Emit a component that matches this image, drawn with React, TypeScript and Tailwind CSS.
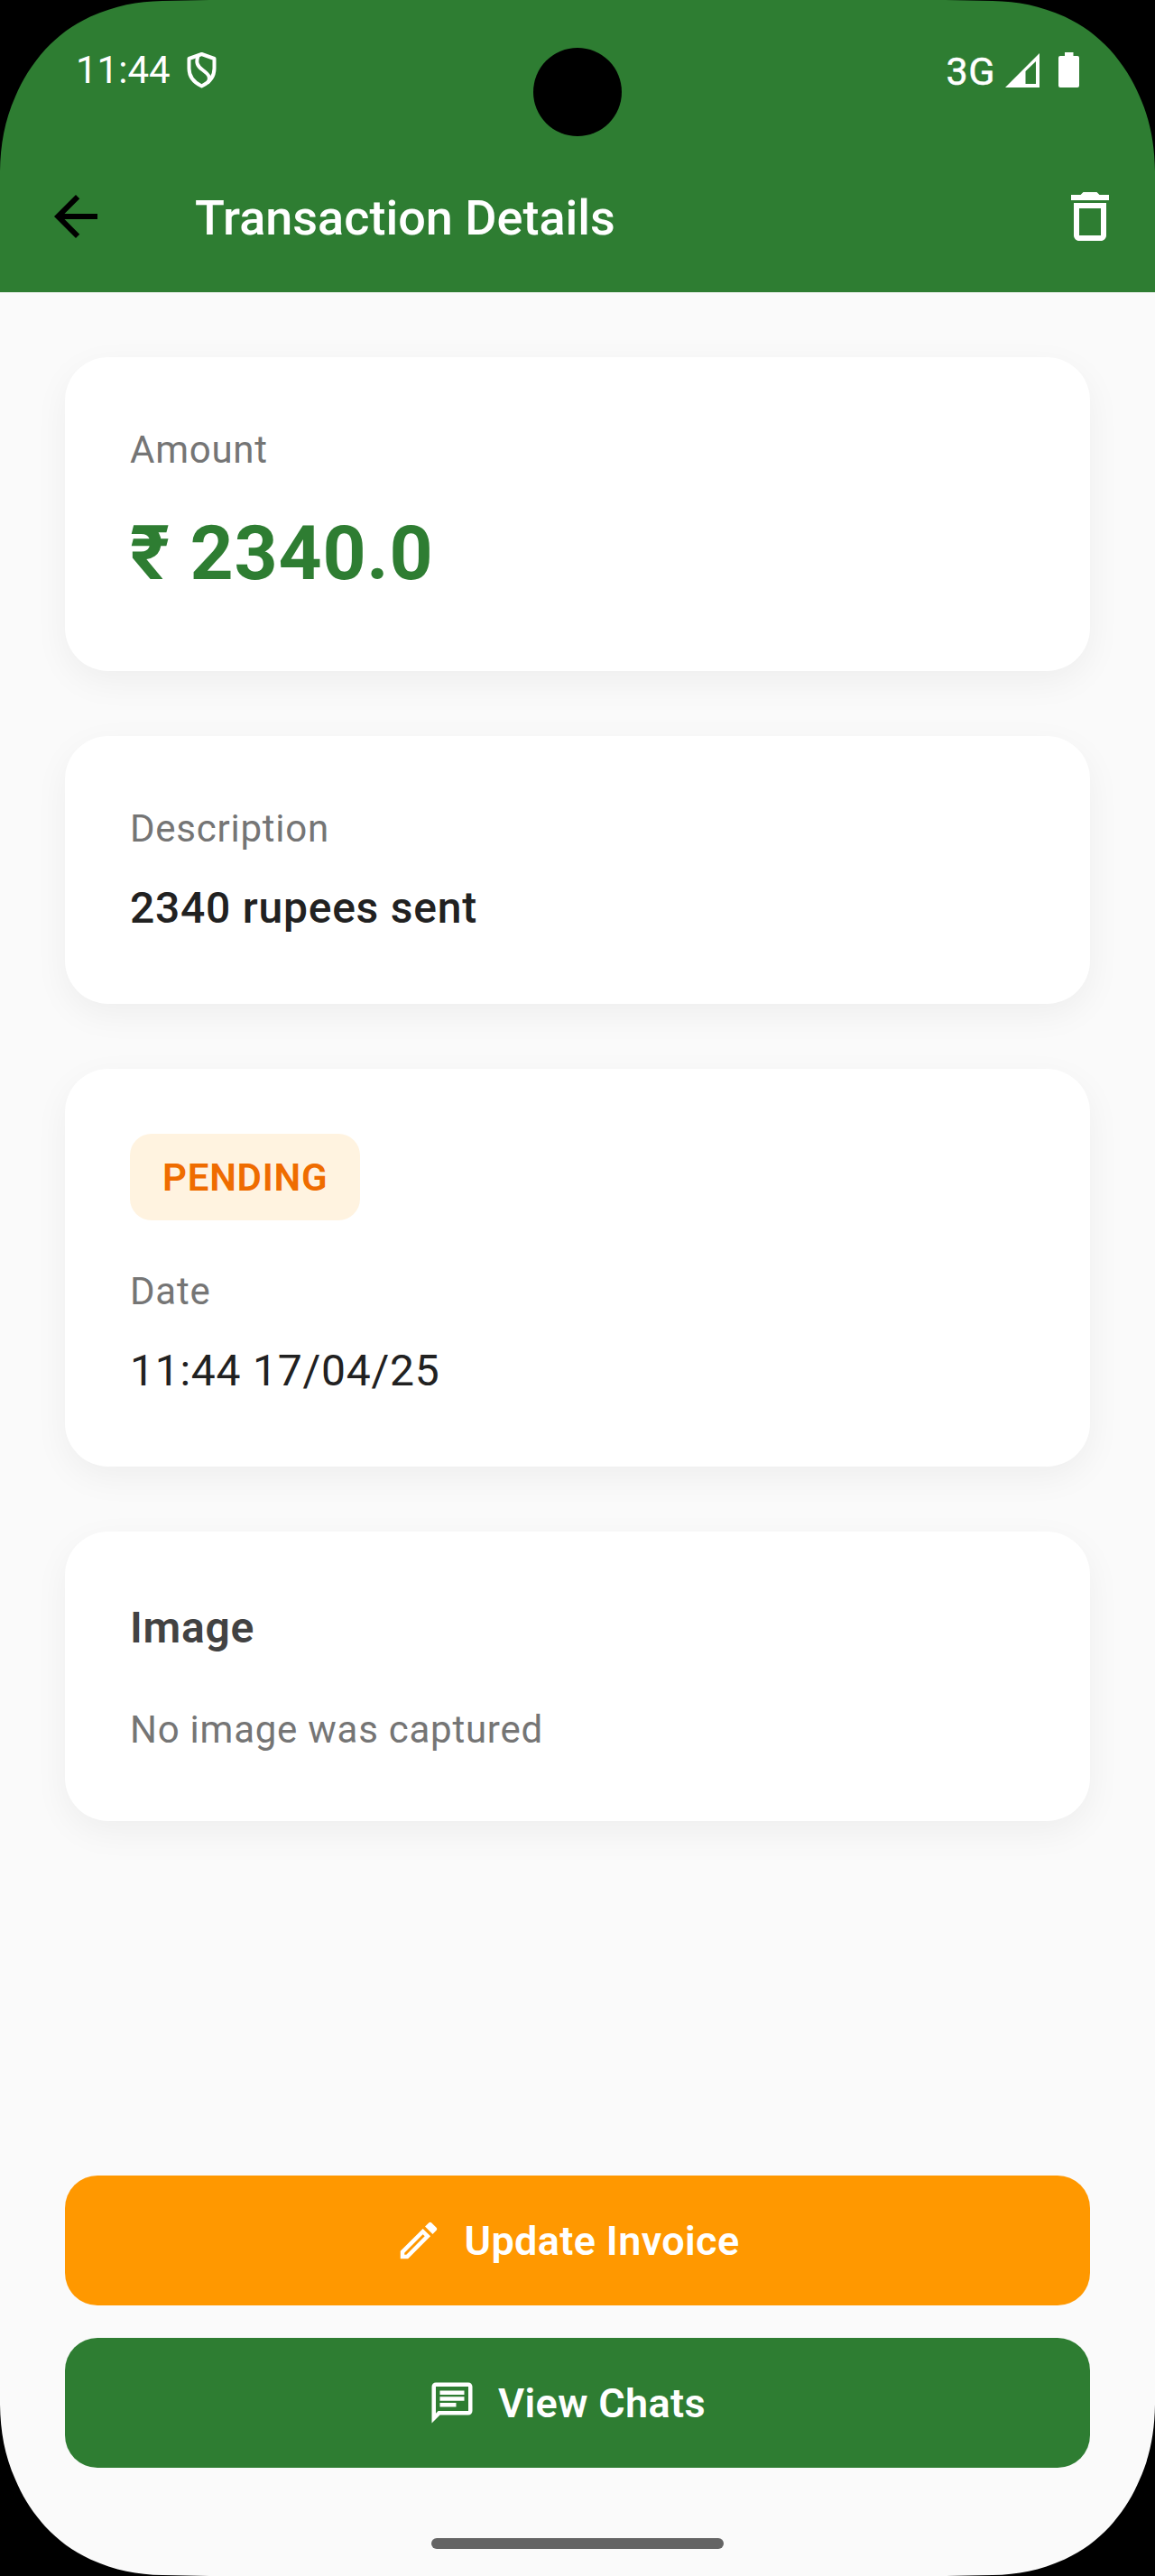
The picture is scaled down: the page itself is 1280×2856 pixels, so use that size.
import React from "react";

const cardClass =
  "flex flex-col items-start rounded-[48px] bg-white p-[72px] shadow-[0_12px_38px_rgba(0,0,0,0.05)]";

function Label({ children }: { children: React.ReactNode }) {
  return <p className="pt-[2px] text-[42px] leading-[58px] tracking-[0.75px] text-[#757575]">{children}</p>;
}

function StatusBar() {
  return (
    <div className="relative flex h-[156px] items-start justify-between pt-[53px] pr-[84px] pl-[84px] text-[42px] leading-[50px]">
      <div className="flex">
        <span className="w-[108px]">11:44</span>
        <svg className="mt-[4px] ml-[14px] h-[42px] w-[35px]" viewBox="0 0 35 42" fill="none" stroke="currentColor" strokeWidth="4">
          <path d="M17.5 3 L31.5 8 V19 C31.5 28 26 34.500 17.500 38.500 C9 34.500 3.500 28 3.500 19 V8 Z" strokeLinejoin="round" />
          <path d="M14 4 C10.500 12 12.500 16 18.500 20.500 C26 26 28 29.500 24 35" />
        </svg>
      </div>
      <div className="flex">
        <span className="mr-[11px] pt-px text-[43px] tracking-[0.5px] [-webkit-text-stroke:0.5px_white]">3G</span>
        <svg className="mt-[5px] h-[40px] w-[38px]" viewBox="0 0 38 40" fill="currentColor">
          <path fillRule="evenodd" d="M0 39 L38 1 V39 Z M22.500 21 V35 H34 V10 Z" />
        </svg>
        <svg className="mt-[5px] ml-[21px] h-[39px] w-[23px]" viewBox="0 0 23 39" fill="currentColor">
          <path d="M7 0 H16.500 V4 H21 Q23 4 23 6 V37 Q23 39 21 39 H2 Q0 39 0 37 V6 Q0 4 2 4 H7 Z" />
        </svg>
      </div>
      <div className="absolute top-[53px] left-[591px] size-[98px] rounded-full bg-black" />
    </div>
  );
}

function Corner({ className }: { className: string }) {
  return (
    <svg className={"absolute size-[236px] " + className} viewBox="0 0 236 236">
      <path d="M0 0 H232 L180 0.900 C152 1.500 128 6 100 18.500 C80 28 65 39 50 55 C35 72 25 88 17 107 C5 134 0.500 160 0 190 Z" />
    </svg>
  );
}

export default function App() {
  return (
    <div className="relative flex h-[2856px] w-[1280px] flex-col overflow-hidden bg-[#fafafa] font-['Roboto',sans-serif]">
      <header className="h-[324px] bg-[#2e7d32] text-white">
        <StatusBar />
        <div className="flex h-[168px] items-center pr-[36px] pl-[48px]">
          <svg className="size-[72px] text-black" viewBox="0 0 24 24" fill="currentColor">
            <path d="M20 11H7.830l5.590-5.590L12 4l-8 8 8 8 1.410-1.410L7.830 13H20v-2z" />
          </svg>
          <h1 className="ml-[96px] flex-1 pt-[4px] text-[54px] leading-[72px] font-medium">Transaction Details</h1>
          <svg className="size-[72px]" viewBox="0 0 24 24" fill="currentColor">
            <path d="M6 19c0 1.100.9 2 2 2h8c1.100 0 2-.9 2-2V7H6v12zM8 9h8v10H8V9zm7.500-5l-1-1h-5l-1 1H5v2h14V4h-3.500z" />
          </svg>
        </div>
      </header>

      <main className="flex flex-1 flex-col gap-[72px] px-[72px] pt-[72px]">
        <section className={cardClass}>
          <Label>Amount</Label>
          <p className="mt-[24px] pt-[4px] text-[84px] leading-[116px] font-bold tracking-[0.75px] text-[#2e7d32]">₹ 2340.0</p>
        </section>
        <section className={cardClass}>
          <Label>Description</Label>
          <p className="mt-[24px] text-[48px] leading-[69px] font-medium tracking-[0.75px] text-[#212121]">2340 rupees sent</p>
        </section>
        <section className={cardClass}>
          <span className="rounded-[24px] bg-[#fff3e0] px-[36px] pt-[20px] pb-[18px] text-[42px] leading-[58px] font-semibold tracking-[0.75px] text-[#ef6c00]">
            PENDING
          </span>
          <div className="mt-[48px]">
            <Label>Date</Label>
          </div>
          <p className="mt-[24px] text-[48px] leading-[69px] tracking-[0.75px] text-[#212121]">11:44 17/04/25</p>
        </section>
        <section className={cardClass}>
          <h2 className="mb-[48px] text-[48px] leading-[69px] font-semibold tracking-[0.75px] text-[#424242]">Image</h2>
          <Label>No image was captured</Label>
        </section>
      </main>

      <footer className="flex h-[444px] flex-col gap-[36px] px-[72px]">
        <button className="flex h-[144px] items-center justify-center gap-[24px] rounded-[36px] bg-[#ff9800] pr-[24px] text-[45px] leading-[60px] font-semibold tracking-[0.35px] text-white">
          <svg className="size-[54px]" viewBox="0 0 24 24" fill="currentColor">
            <path d="M14.060 9.020l.92.920L5.920 19H5v-.92l9.060-9.060M17.660 3c-.25 0-.51.100-.70.290l-1.830 1.830 3.750 3.750 1.830-1.830c.39-.39.39-1.020 0-1.410l-2.340-2.340c-.2-.2-.45-.29-.71-.29zm-3.600 3.190L3 17.250V21h3.750L17.810 9.940l-3.750-3.750z" />
          </svg>
          <span className="pt-[2px]">Update Invoice</span>
        </button>
        <button className="flex h-[144px] items-center justify-center gap-[24px] rounded-[36px] bg-[#2e7d32] pr-[24px] text-[45px] leading-[60px] font-semibold tracking-[0.35px] text-white">
          <svg className="size-[54px]" viewBox="0 0 24 24" fill="currentColor">
            <path d="M4 4h16v12H5.170L4 17.170V4m0-2c-1.100 0-1.990.9-1.990 2L2 22l4-4h14c1.100 0 2-.9 2-2V4c0-1.100-.9-2-2-2H4zm2 10h8v2H6v-2zm0-3h12v2H6V9zm0-3h12v2H6V6z" />
          </svg>
          <span className="pt-[2px]">View Chats</span>
        </button>
        <div className="mt-[42px] h-[12px] w-[324px] self-center rounded-full bg-[#646464]" />
      </footer>

      <Corner className="top-0 left-0" />
      <Corner className="top-0 right-0 -scale-x-100" />
      <Corner className="bottom-0 left-0 -scale-y-100" />
      <Corner className="right-0 bottom-0 -scale-100" />
    </div>
  );
}
